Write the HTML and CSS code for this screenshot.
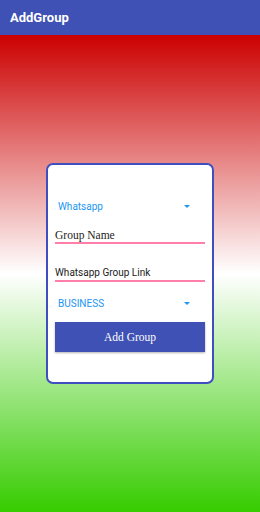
FILE: index.html
```html
<!DOCTYPE html>
<html lang="en">
<head>
    <meta charset="UTF-8">
    <title>AddGroup</title>
    <link rel="stylesheet" href="styles.css">
</head>
<body>
    <header class="appbar">AddGroup</header>
    <main class="content">
        <div class="card">
            <div class="spinner spinner-first">
                <span>Whatsapp</span>
                <svg class="arrow" width="6" height="3" viewBox="0 0 6 3"><path d="M0 0h6L3 3z" fill="#2196f3"/></svg>
            </div>
            <div class="field field-name"><span>Group Name</span></div>
            <div class="field field-link"><span>Whatsapp Group Link</span></div>
            <div class="spinner spinner-second">
                <span>BUSINESS</span>
                <svg class="arrow" width="6" height="3" viewBox="0 0 6 3"><path d="M0 0h6L3 3z" fill="#2196f3"/></svg>
            </div>
            <button class="add-btn">Add Group</button>
        </div>
    </main>
</body>
</html>
```

FILE: styles.css
```css
body {
    margin: 0;
    width: 260px;
    height: 512px;
    display: flex;
    flex-direction: column;
    font-family: Roboto, "Liberation Sans", sans-serif;
}
.appbar {
    height: 35px;
    flex-shrink: 0;
    background: #3f51b5;
    color: #fff;
    font-size: 13px;
    font-weight: bold;
    padding-left: 10px;
    display: flex;
    align-items: center;
    box-sizing: border-box;
}
.content {
    flex: 1;
    display: flex;
    align-items: center;
    justify-content: center;
    background: linear-gradient(#cc0000, #ffffff, #36cc00);
}
.card {
    width: 168px;
    height: 221px;
    box-sizing: border-box;
    background: #fff;
    border: 2px solid #3f4fbf;
    border-radius: 7px;
    padding: 29px 7px 30px;
    display: flex;
    flex-direction: column;
}
.spinner {
    height: 24px;
    display: flex;
    align-items: center;
    justify-content: space-between;
    padding: 0 15px 0 3px;
    color: #2196f3;
    font-size: 10px;
}
.spinner-second {
    margin-top: 9px;
}
.field {
    display: flex;
    align-items: flex-end;
    border-bottom: 2px solid #ff7fa8;
    box-sizing: border-box;
    color: #222;
}
.field-name {
    height: 26px;
    font-family: "Liberation Serif", serif;
    font-size: 11.5px;
    padding-bottom: 1px;
}
.field-link {
    height: 38px;
    font-size: 10px;
    padding-bottom: 2px;
}
.add-btn {
    margin-top: 7px;
    height: 30px;
    border: none;
    background: #3f51b5;
    color: #fff;
    font-family: "Liberation Serif", serif;
    font-size: 11.5px;
    box-shadow: 0 1px 2px rgba(0,0,0,0.3);
}
```
